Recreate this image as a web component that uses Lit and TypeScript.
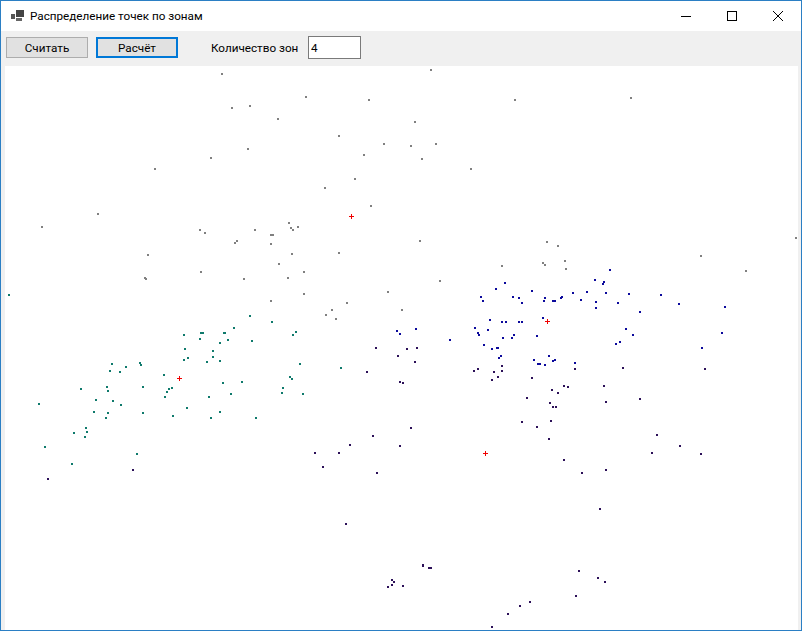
import { css, html, svg, LitElement } from 'lit';
import { customElement, state } from 'lit/decorators.js';

type Pt = [number, number];

const grey: Pt[] = [
  [222,74],[232,108],[250,106],[248,149],[211,158],[155,169],[98,214],[42,227],[200,230],[205,233],[255,230],[235,243],[237,241],
  [431,70],[306,97],[369,100],[515,100],[278,119],[415,122],[339,136],[384,144],[411,146],[436,144],[364,155],[422,159],[471,169],
  [355,179],[325,188],[371,206],[289,223],[291,228],[293,230],[298,227],[271,235],[273,235],[271,244],[420,241],
  [631,98],[547,242],[558,246],[796,238],[148,255],[201,272],[145,278],[146,279],[244,279],
  [292,254],[339,253],[279,264],[304,272],[288,278],[502,266],[440,281],[388,292],[304,294],[271,301],[347,303],[332,310],[402,310],[326,315],[336,319],
  [543,263],[545,265],[565,261],[566,269],[701,256],[746,271],
];

const teal: Pt[] = [
  [9,295],[250,316],[234,328],[201,333],[203,333],[224,333],[225,333],[184,335],[200,339],[228,340],[252,341],[220,343],[185,349],[213,351],[213,357],
  [188,358],[184,360],[220,361],[207,362],[112,364],[140,363],[141,365],[126,367],[110,371],[120,372],[164,375],[223,383],[242,382],[107,387],[143,387],
  [81,389],[172,388],[169,389],[108,391],[167,392],[231,394],[209,397],[165,397],[96,400],[113,401],[121,405],[39,404],[187,408],[94,412],[108,413],
  [143,413],[220,412],[173,416],[211,418],[106,418],[256,418],[86,428],[87,432],[74,433],[85,437],[45,447],[137,454],[72,464],
  [272,322],[296,332],[293,335],[300,364],[341,368],[290,377],[292,379],[283,388],[282,393],[303,394],
];

const blue: Pt[] = [
  [505,283],[496,289],[532,291],[481,297],[513,297],[519,298],[483,301],[522,303],[490,320],[502,322],[506,322],[519,322],[522,322],[475,328],[397,331],
  [416,329],[488,330],[400,334],[478,333],[479,335],[514,335],[537,336],[450,340],[503,338],[512,338],[484,345],[492,349],[497,348],[498,348],[501,356],
  [499,358],[534,360],[538,364],[540,364],
  [610,270],[595,280],[604,282],[603,284],[573,293],[587,292],[606,293],[629,294],[661,295],[545,298],[562,297],[561,298],[544,301],[553,301],[555,301],
  [581,300],[596,302],[618,303],[679,304],[596,308],[640,312],[725,307],[543,318],[626,329],[633,335],[722,333],[620,342],[616,344],[702,348],[549,356],
  [555,360],[553,361],[545,365],[575,363],
];

const indigo: Pt[] = [
  [133,470],[48,479],[376,348],[407,349],[417,348],[398,356],[415,362],[502,366],[478,369],[474,371],[494,372],[502,371],[367,372],[498,377],[532,378],
  [492,380],[400,382],[403,383],[527,398],[522,422],[537,427],[411,428],[373,436],
  [575,369],[623,368],[705,369],[564,386],[568,387],[604,386],[552,390],[558,393],[550,403],[553,407],[556,407],[606,402],[640,399],[551,421],[549,439],[657,435],
  [350,445],[400,446],[315,453],[339,453],[323,467],[377,473],[346,524],[423,565],[423,566],[429,568],[431,568],[392,580],[394,582],[392,585],[388,587],[403,586],
  [530,602],[520,606],[508,614],[492,627],
  [564,460],[582,473],[606,470],[652,453],[680,446],[701,454],[600,509],[579,571],[598,578],[605,582],[576,596],
];

const centres: Pt[] = [[351,216],[179,378],[547,321],[485,453]];

const zones: { color: string; points: Pt[] }[] = [
  { color: '#808080', points: grey },
  { color: '#0f7a6c', points: teal },
  { color: '#0c0a9c', points: blue },
  { color: '#2c1058', points: indigo },
];

@customElement('app-root')
export class AppRoot extends LitElement {
  static override styles = css`
    :host {
      display: flex;
      flex-direction: column;
      width: 802px;
      height: 631px;
      box-sizing: border-box;
      border: 1px solid #2b7fc4;
      background: #f0f0f0;
      font-family: Roboto, 'Open Sans', sans-serif;
      font-size: 11.7px;
      color: #000;
      overflow: hidden;
    }

    .titlebar {
      display: flex;
      align-items: center;
      height: 30px;
      background: #fff;
      padding-left: 10px;
      flex: none;
    }

    .app-icon {
      margin-right: 6px;
    }

    .title {
      flex: 1;
    }

    .caps {
      display: flex;
      height: 100%;
    }

    .cap {
      display: flex;
      align-items: center;
      justify-content: center;
      width: 46px;
    }

    .toolbar {
      display: flex;
      align-items: center;
      box-sizing: border-box;
      height: 35px;
      flex: none;
      padding: 0 0 2px 5px;
    }

    .btn {
      box-sizing: border-box;
      width: 82px;
      height: 21px;
      margin-right: 8px;
      padding: 0;
      border: 1px solid #adadad;
      background: #e1e1e1;
      font: inherit;
      color: inherit;
    }

    .btn.focused {
      border: 2px solid #0078d7;
    }

    .label {
      width: 87px;
      margin-left: 25px;
      margin-right: 10px;
      white-space: nowrap;
    }

    .input {
      box-sizing: border-box;
      width: 53px;
      height: 23px;
      padding: 0 2px;
      border: 1px solid #7a7a7a;
      background: #fff;
      font: inherit;
      color: inherit;
      outline: none;
    }

    .plot {
      flex: 1;
      min-height: 0;
      margin: 0 3px 0 4px;
      background: #fff;
    }

    .plot svg {
      display: block;
      width: 793px;
      height: 564px;
    }
  `;

  @state() private count = '4';

  private renderPlot() {
    return html`<svg viewBox="5 66 793 564" shape-rendering="crispEdges">
      ${zones.map(
        (z) => svg`<g fill=${z.color}>
          ${z.points.map(([x, y]) => svg`<rect x=${x - 1} y=${y - 1} width="2" height="2"></rect>`)}
        </g>`,
      )}
      <g fill="#f00000">
        ${centres.map(
          ([x, y]) => svg`<rect x=${x - 2} y=${y} width="5" height="1"></rect>
            <rect x=${x} y=${y - 2} width="1" height="5"></rect>`,
        )}
      </g>
    </svg>`;
  }

  protected override render() {
    return html`
      <div class="titlebar">
        <svg class="app-icon" width="13" height="13" viewBox="0 0 13 13" shape-rendering="crispEdges">
          <rect x="5" y="0" width="8" height="7" fill="#444"></rect>
          <rect x="0" y="4" width="4" height="5" fill="#555"></rect>
          <rect x="5" y="8" width="6" height="3" fill="#666"></rect>
        </svg>
        <span class="title">Распределение точек по зонам</span>
        <div class="caps">
          <div class="cap">
            <svg width="10" height="10" viewBox="0 0 10 10" shape-rendering="crispEdges">
              <rect x="0" y="5" width="10" height="1" fill="#000"></rect>
            </svg>
          </div>
          <div class="cap">
            <svg width="10" height="10" viewBox="0 0 10 10" shape-rendering="crispEdges">
              <rect x="0.5" y="0.5" width="9" height="9" fill="none" stroke="#000"></rect>
            </svg>
          </div>
          <div class="cap">
            <svg width="10" height="10" viewBox="0 0 10 10">
              <path d="M0 0L10 10M10 0L0 10" stroke="#000" stroke-width="1" fill="none"></path>
            </svg>
          </div>
        </div>
      </div>
      <div class="toolbar">
        <button class="btn">Считать</button>
        <button class="btn focused">Расчёт</button>
        <span class="label">Количество зон</span>
        <input class="input" .value=${this.count} />
      </div>
      <div class="plot">${this.renderPlot()}</div>
    `;
  }
}
